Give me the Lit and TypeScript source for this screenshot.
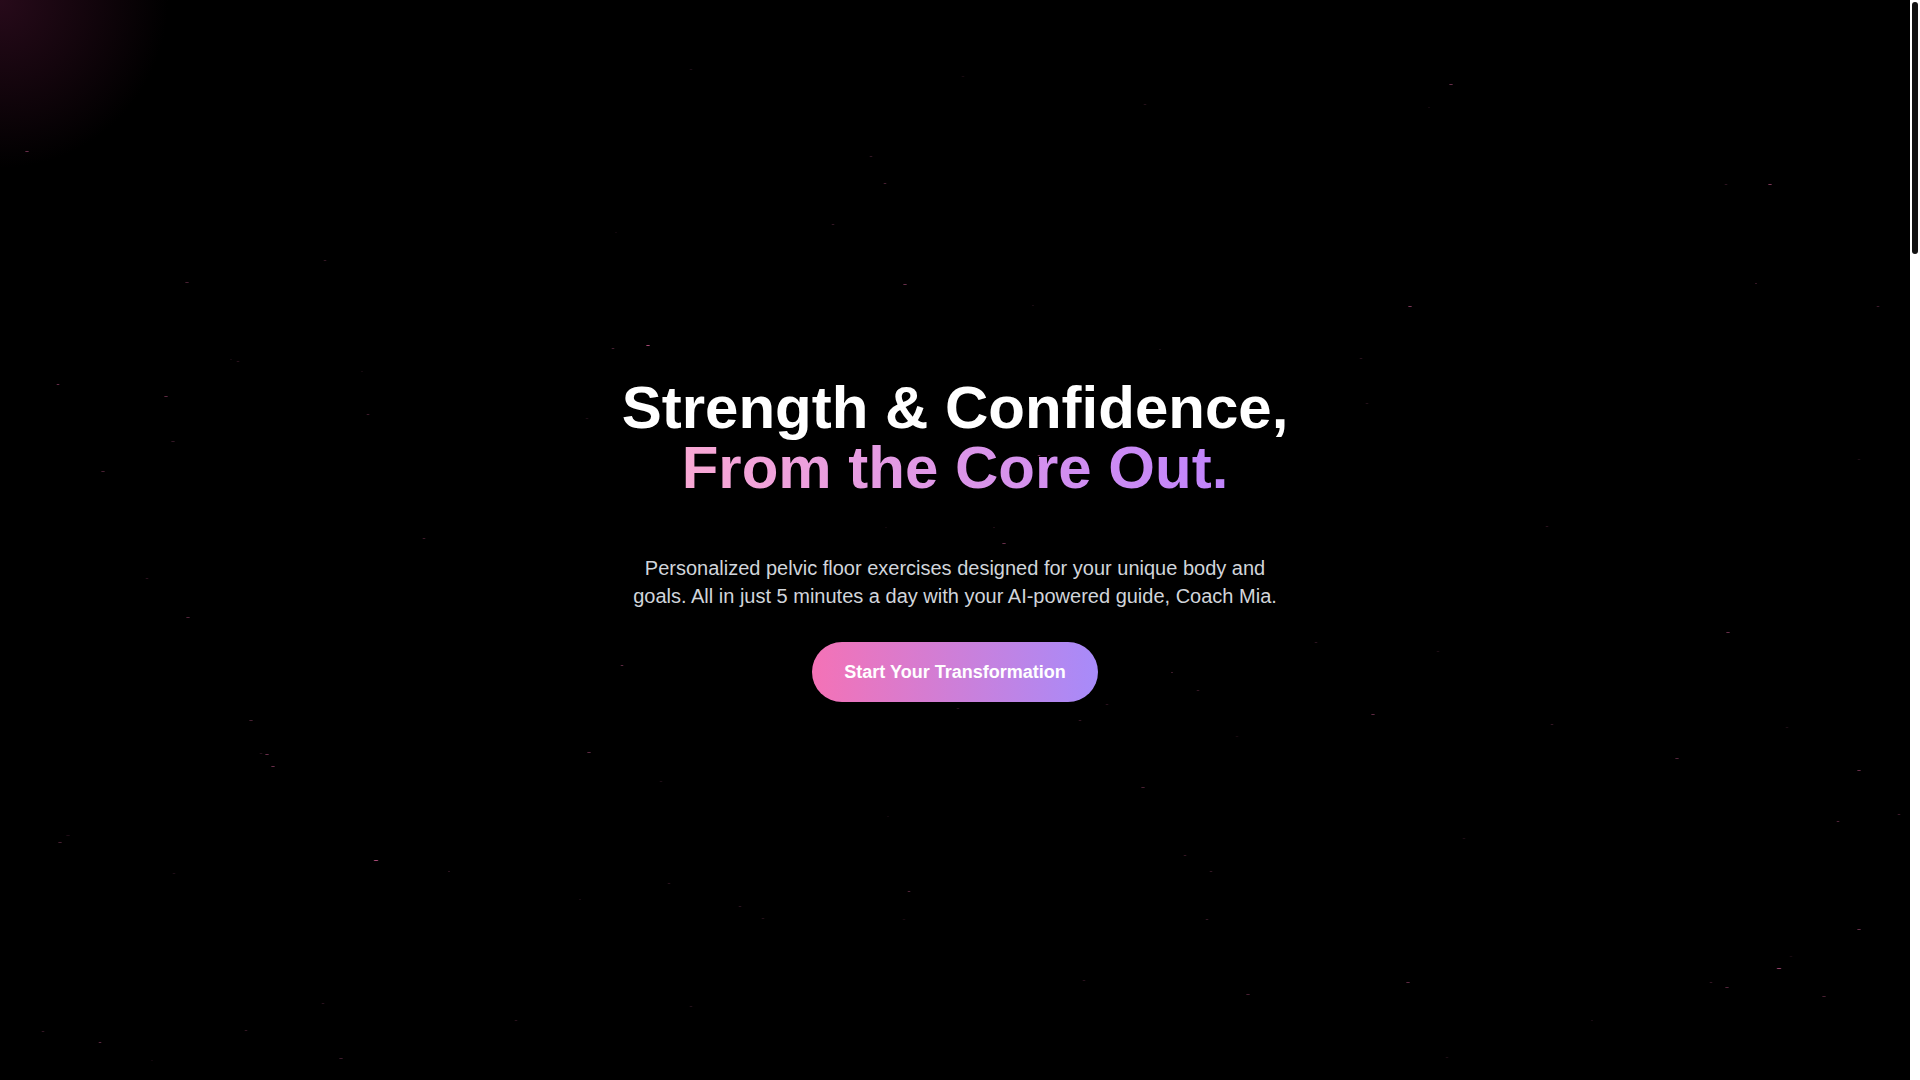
import { LitElement, html, svg, css } from "lit";
import { customElement } from "lit/decorators.js";

type Particle = [x: number, y: number, width: number, opacity: number];

// Drifting dust on a 1910 x 1080 field: centre x, centre y, width, opacity.
const PARTICLES: Particle[] = [
  [27, 151, 4, 0.5], [691, 69, 3, 0.15], [1145, 104, 3, 0.18], [1451, 84, 4, 0.5],
  [1429, 107, 2, 0.12], [963, 76, 3, 0.12], [616, 232, 2, 0.1],
  [871, 156, 3, 0.25], [885, 183, 3, 0.35], [833, 224, 3, 0.25], [1726, 184, 3, 0.22],
  [1770, 184, 4, 0.6], [1756, 283, 2, 0.3], [1878, 306, 3, 0.3], [1410, 306, 4, 0.6],
  [905, 284, 4, 0.5], [1033, 305, 2, 0.15], [187, 282, 4, 0.35], [325, 260, 3, 0.25],
  [231, 359, 2, 0.12], [238, 361, 3, 0.2], [362, 371, 2, 0.12], [58, 384, 3, 0.5],
  [166, 396, 4, 0.45], [368, 414, 3, 0.3], [173, 441, 4, 0.25], [103, 471, 4, 0.35],
  [424, 538, 3, 0.3], [147, 578, 3, 0.2], [188, 617, 4, 0.4], [613, 348, 3, 0.35],
  [648, 345, 4, 0.8], [587, 418, 3, 0.15], [1160, 349, 2, 0.15], [1361, 358, 3, 0.2],
  [1367, 403, 3, 0.18], [1859, 459, 3, 0.15], [1547, 526, 3, 0.2], [886, 527, 2, 0.1],
  [994, 527, 2, 0.18], [1004, 543, 4, 0.5], [1039, 455, 3, 0.5], [1728, 632, 4, 0.5],
  [1316, 642, 3, 0.22], [1438, 651, 3, 0.15], [622, 665, 3, 0.45], [1172, 672, 2, 0.35],
  [1198, 690, 3, 0.25], [1107, 704, 3, 0.2], [958, 708, 3, 0.2], [1080, 720, 3, 0.25],
  [1373, 714, 4, 0.45], [1552, 724, 3, 0.25], [1787, 727, 3, 0.15], [251, 720, 4, 0.35],
  [1237, 736, 3, 0.12], [261, 753, 3, 0.2], [267, 754, 4, 0.5], [273, 766, 4, 0.5],
  [589, 752, 4, 0.45], [661, 781, 3, 0.15], [1143, 787, 4, 0.35], [1677, 758, 4, 0.4],
  [888, 816, 2, 0.1], [1859, 770, 4, 0.5], [1838, 821, 3, 0.4], [1899, 814, 3, 0.3],
  [68, 835, 4, 0.15], [60, 842, 4, 0.35], [174, 873, 3, 0.15], [376, 860, 5, 0.8],
  [449, 871, 2, 0.25], [669, 883, 3, 0.2], [580, 899, 2, 0.15], [740, 906, 3, 0.22],
  [763, 918, 3, 0.18], [904, 919, 3, 0.12], [909, 891, 3, 0.4], [1185, 855, 3, 0.25],
  [1211, 871, 3, 0.25], [1207, 919, 3, 0.25], [1464, 838, 3, 0.15], [1084, 980, 3, 0.2],
  [1248, 994, 4, 0.35], [1408, 982, 4, 0.45], [1711, 982, 3, 0.25], [1727, 987, 4, 0.4],
  [1779, 968, 5, 0.7], [1791, 956, 3, 0.12], [1859, 929, 4, 0.5], [1824, 996, 4, 0.35],
  [1592, 1020, 2, 0.15], [1447, 1057, 3, 0.15], [323, 1003, 3, 0.2], [246, 1030, 3, 0.25],
  [43, 1031, 3, 0.25], [100, 1042, 3, 0.45], [152, 1060, 2, 0.1], [341, 1058, 4, 0.3],
  [516, 1020, 3, 0.2], [691, 1006, 3, 0.18],
];

@customElement("app-root")
export class AppRoot extends LitElement {
  static styles = css`
    :host {
      display: block;
      font-family: "Liberation Sans", Arial, sans-serif;
    }
    .page {
      display: grid;
      grid-template-columns: minmax(0, 1fr) 10px;
      min-height: 100vh;
      background: #fff;
    }
    .hero {
      position: relative;
      display: flex;
      flex-direction: column;
      align-items: center;
      justify-content: center;
      overflow: hidden;
      background: radial-gradient(circle at 0 0, #270a1a 0, #14050d 84px, #000 168px);
      text-align: center;
    }
    .particles {
      position: absolute;
      inset: 0;
      width: 100%;
      height: 100%;
      pointer-events: none;
    }
    .particle {
      fill: #e0649f;
    }
    .title {
      margin: 0 0 56px;
      color: #fff;
      font-size: 60px;
      line-height: 60px;
      font-weight: 700;
    }
    .accent {
      display: table;
      margin: 0 auto;
      background: linear-gradient(to right, #f9a8d4, #c084fc);
      -webkit-background-clip: text;
      background-clip: text;
      color: transparent;
    }
    .lead {
      max-width: 672px;
      margin: 0 0 32px;
      color: #d1d5db;
      font-size: 20px;
      line-height: 28px;
    }
    .cta {
      padding: 16px 32px;
      border: 0;
      border-radius: 30px;
      background: linear-gradient(to right, #f472b6, #a78bfa);
      color: #fff;
      font: 700 18px/28px "Liberation Sans", Arial, sans-serif;
      cursor: pointer;
    }
    .track {
      padding: 2px;
    }
    .thumb {
      height: 252px;
      border-radius: 3px;
      background: #111;
    }
  `;

  render() {
    return html`
      <div class="page">
        <main class="hero">
          <svg class="particles" viewBox="0 0 1910 1080" preserveAspectRatio="none" aria-hidden="true">
            ${PARTICLES.map(
              ([x, y, w, o]) => svg`<ellipse class="particle" cx=${x} cy=${y + 0.5} rx=${w / 2} ry="0.6" opacity=${o}></ellipse>`,
            )}
          </svg>
          <h1 class="title">Strength &amp; Confidence,<span class="accent">From the Core Out.</span></h1>
          <p class="lead">
            Personalized pelvic floor exercises designed for your unique body and goals. All in just 5 minutes a day
            with your AI-powered guide, Coach Mia.
          </p>
          <button class="cta" type="button">Start Your Transformation</button>
        </main>
        <div class="track"><div class="thumb"></div></div>
      </div>
    `;
  }
}
